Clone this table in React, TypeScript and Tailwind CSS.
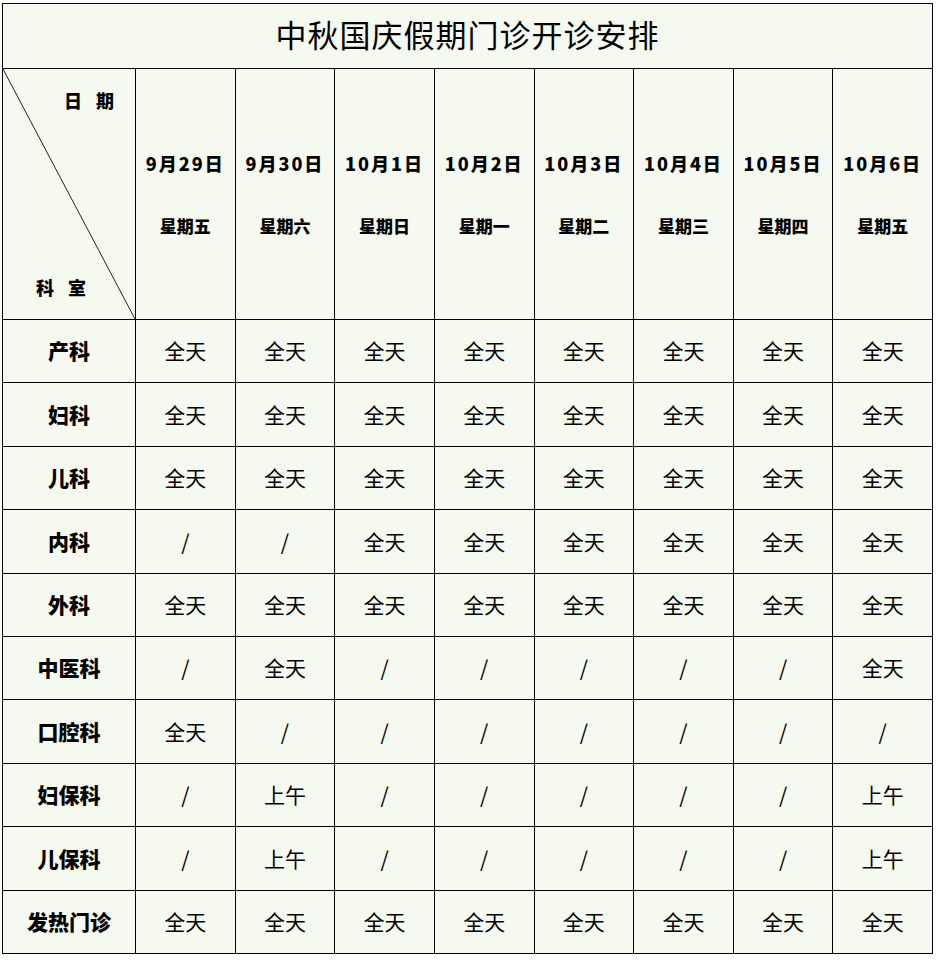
import React from "react";

const dates = [
  { d: "9月29日", w: "星期五" },
  { d: "9月30日", w: "星期六" },
  { d: "10月1日", w: "星期日" },
  { d: "10月2日", w: "星期一" },
  { d: "10月3日", w: "星期二" },
  { d: "10月4日", w: "星期三" },
  { d: "10月5日", w: "星期四" },
  { d: "10月6日", w: "星期五" },
];

const A = "全天";
const N = "/";
const M = "上午";

const rows: { name: string; cells: string[] }[] = [
  { name: "产科", cells: [A, A, A, A, A, A, A, A] },
  { name: "妇科", cells: [A, A, A, A, A, A, A, A] },
  { name: "儿科", cells: [A, A, A, A, A, A, A, A] },
  { name: "内科", cells: [N, N, A, A, A, A, A, A] },
  { name: "外科", cells: [A, A, A, A, A, A, A, A] },
  { name: "中医科", cells: [N, A, N, N, N, N, N, A] },
  { name: "口腔科", cells: [A, N, N, N, N, N, N, N] },
  { name: "妇保科", cells: [N, M, N, N, N, N, N, M] },
  { name: "儿保科", cells: [N, M, N, N, N, N, N, M] },
  { name: "发热门诊", cells: [A, A, A, A, A, A, A, A] },
];

const sans = "font-['Noto_Sans_CJK_SC','Noto_Sans',sans-serif]";

export default function App() {
  return (
    <div className={`min-h-[962px] w-[939px] bg-white pt-[3px] pl-[2px] text-black ${sans}`}>
      <div className="grid w-[931px] grid-cols-[133px_repeat(8,1fr)] border-l border-t border-black bg-[#f6f9ef]">
        {/* title */}
        <div className="col-span-9 flex h-[65px] items-center justify-center border-b border-r border-black">
          <span className="font-['Liberation_Serif','Noto_Sans_CJK_SC',serif] text-[31px] leading-none tracking-[1px]">
            中秋国庆假期门诊开诊安排
          </span>
        </div>

        {/* header */}
        <div className="relative h-[251px] border-b border-r border-black">
          <svg className="absolute inset-0 h-full w-full" viewBox="0 0 132 250" preserveAspectRatio="none">
            <line x1="0" y1="0" x2="132" y2="250" stroke="#222" strokeWidth="1" />
          </svg>
          <div className="absolute left-[61px] top-[22px] text-[18px] font-black leading-none tracking-[14px]">日期</div>
          <div className="absolute left-[33px] top-[209px] text-[18px] font-black leading-none tracking-[14px]">科室</div>
        </div>
        {dates.map((c) => (
          <div
            key={c.d + c.w}
            className="flex h-[251px] flex-col items-center justify-center gap-[45px] border-b border-r border-black font-black leading-none"
          >
            <span className="text-[18px] tracking-[2px]">{c.d}</span>
            <span className="text-[17px]">{c.w}</span>
          </div>
        ))}

        {/* body */}
        {rows.map((r) => (
          <React.Fragment key={r.name}>
            <div className="flex h-[63.4px] items-center justify-center border-b border-r border-black text-[21px] font-black">
              {r.name}
            </div>
            {r.cells.map((v, i) => (
              <div
                key={i}
                className="flex h-[63.4px] items-center justify-center border-b border-r border-black text-[21px]"
              >
                {v}
              </div>
            ))}
          </React.Fragment>
        ))}
      </div>
    </div>
  );
}
